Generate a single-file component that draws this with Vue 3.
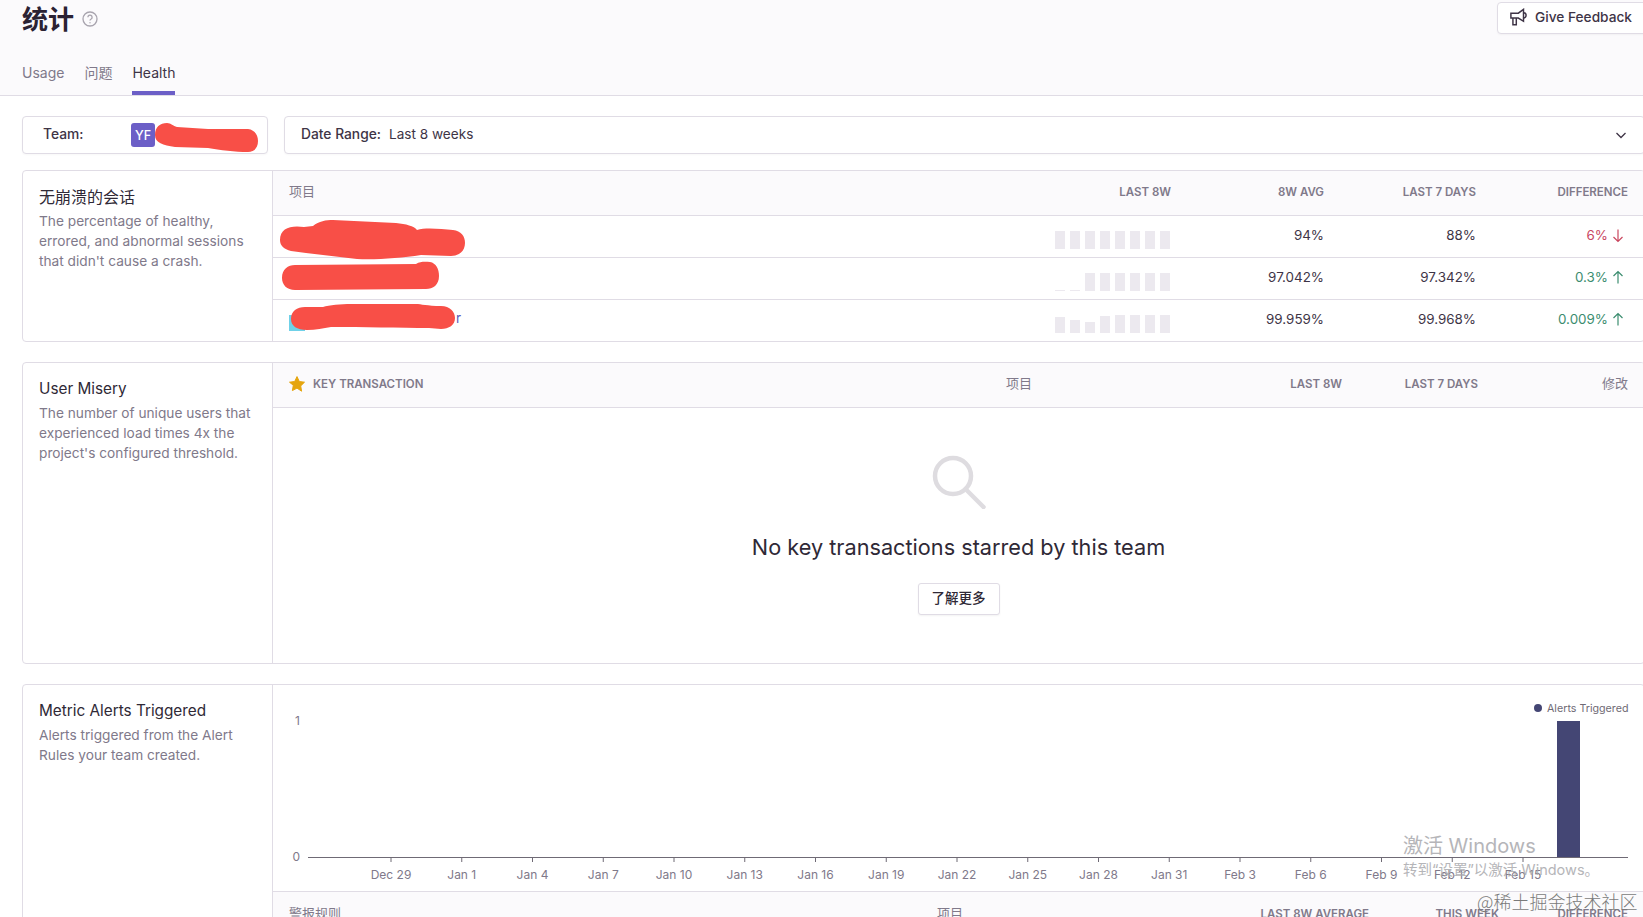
<script setup>
const rows = [
  { avg: '94%', week: '88%', diff: '6%', dir: 'down', bars: [18, 18, 18, 18, 18, 18, 18, 18] },
  { avg: '97.042%', week: '97.342%', diff: '0.3%', dir: 'up', bars: [1, 1, 18, 18, 18, 18, 18, 18] },
  { avg: '99.959%', week: '99.968%', diff: '0.009%', dir: 'up', bars: [16, 13, 11, 17, 18, 18, 18, 18] },
]
const dates = ['Dec 29', 'Jan 1', 'Jan 4', 'Jan 7', 'Jan 10', 'Jan 13', 'Jan 16', 'Jan 19', 'Jan 22', 'Jan 25', 'Jan 28', 'Jan 31', 'Feb 3', 'Feb 6', 'Feb 9', 'Feb 12', 'Feb 15']
const ticks = dates.map((label, i) => ({ label, x: 118 + i * 70.75 }))
</script>

<template>
  <div class="viewport">
    <header class="page-header">
      <div class="title-row">
        <div class="title-group">
          <h1 class="title">统计</h1>
          <svg class="help" viewBox="0 0 16 16">
            <circle cx="8" cy="8" r="7" />
            <path d="M5.900 6.200a2.100 2.100 0 1 1 3.200 1.800c-.7.4-1.100.8-1.100 1.600" />
            <circle class="dot" cx="8" cy="11.800" r=".7" />
          </svg>
        </div>
        <button class="feedback">
          <svg viewBox="0 0 16 16">
            <path d="M.8 4.600h6.600L12 1.200v10.600L7.400 8.900H.8z" />
            <path d="M12 4.200a2.300 2.300 0 0 1 0 4.600" />
            <path d="M2.600 8.900v5.900h3V8.900" />
          </svg>
          <span>Give Feedback</span>
        </button>
      </div>
      <nav class="tabs">
        <a class="tab">Usage</a>
        <a class="tab">问题</a>
        <a class="tab active">Health</a>
      </nav>
    </header>

    <main class="main">
      <div class="filters">
        <div class="filter team">
          <span class="filter-label team-label">Team:</span>
          <span class="avatar">YF</span>
          <svg class="blob team-blob" width="110" height="40" viewBox="0 0 110 40">
            <path d="M0 18C0 10 5 6 12 6C16 6 18 9 22 10L53 12L93 12C100 13 103 18 103 24C103 31 99 35 93 35C80 35 65 33 53 31L20 30C8 28 0 26 0 18Z" />
          </svg>
        </div>
        <div class="filter date">
          <span class="filter-label">Date Range:</span>
          <span class="filter-value">Last 8 weeks</span>
          <svg class="chevron" viewBox="0 0 12 12"><path d="M1.500 4l4.500 4.500L10.500 4" /></svg>
        </div>
      </div>

      <section class="card">
        <div class="side">
          <h2 class="zh">无崩溃的会话</h2>
          <p>The percentage of healthy, errored, and abnormal sessions that didn't cause a crash.</p>
        </div>
        <div class="panel">
          <div class="thead grid-sessions">
            <span class="cjk">项目</span>
            <span class="r">LAST 8W</span>
            <span class="r">8W AVG</span>
            <span class="r">LAST 7 DAYS</span>
            <span class="r">DIFFERENCE</span>
          </div>
          <div class="rows">
            <div v-for="(row, i) in rows" :key="i" class="row grid-sessions">
              <span class="project">
                <template v-if="i === 2"><i class="tile"></i><span class="project-name">r</span></template>
                <i v-if="i === 0" class="tile dark"></i>
              </span>
              <span class="spark">
                <i v-for="(b, j) in row.bars" :key="j" :style="{ height: b + 'px' }"></i>
              </span>
              <span class="r">{{ row.avg }}</span>
              <span class="r">{{ row.week }}</span>
              <span class="r diff" :class="row.dir">
                {{ row.diff }}
                <svg viewBox="0 0 12 14">
                  <path v-if="row.dir === 'down'" d="M6 1v12M1.500 8.500L6 13l4.500-4.500" />
                  <path v-else d="M6 13V1M1.500 5.500L6 1l4.500 4.500" />
                </svg>
              </span>
            </div>
            <svg class="blob rows-blob" width="210" height="126" viewBox="0 0 210 126">
              <path d="M9 26C9 14 20 11 33 13L42 12C48 7 55 6 62 6L125 9C135 10 143 12 146 16C155 13 170 15 182 16C190 17 194 22 194 29C194 37 188 42 180 42L150 41C130 44 105 46 86 45L35 39L20 37C13 35 9 32 9 26Z" />
              <path d="M11 64C11 55 17 51 24 51L145 50C150 47 155 48 159 48C165 49 168 55 168 62C168 71 162 75 155 75L24 76C16 76 11 71 11 64Z" />
              <path d="M20 105C20 97 26 93 34 93L52 93C58 91 70 90 80 90L145 90C150 90 156 92 170 92C179 92 184 98 184 104C184 111 178 115 170 115L158 114C130 114 90 113 60 113C52 114 45 116 36 116C26 116 20 112 20 105Z" />
            </svg>
          </div>
        </div>
      </section>

      <section class="card misery">
        <div class="side">
          <h2>User Misery</h2>
          <p>The number of unique users that experienced load times 4x the project's configured threshold.</p>
        </div>
        <div class="panel">
          <div class="thead grid-misery">
            <span class="key">
              <svg viewBox="0 0 16 16"><path d="M8 .6l2.300 4.900 5.200.7-3.800 3.700.9 5.300L8 12.100l-4.600 2.500.9-5.300L.5 6.200l5.200-.7z" /></svg>
              KEY TRANSACTION
            </span>
            <span class="cjk">项目</span>
            <span class="r">LAST 8W</span>
            <span class="r">LAST 7 DAYS</span>
            <span class="r cjk">修改</span>
          </div>
          <div class="empty">
            <svg class="search" viewBox="0 0 54 54">
              <circle cx="21" cy="21" r="18" />
              <path d="M33.500 34l18 18" />
            </svg>
            <p class="empty-text">No key transactions starred by this team</p>
            <button class="more">了解更多</button>
          </div>
        </div>
      </section>

      <section class="card alerts">
        <div class="side">
          <h2>Metric Alerts Triggered</h2>
          <p>Alerts triggered from the Alert Rules your team created.</p>
        </div>
        <div class="panel">
          <svg class="chart" width="1371" height="206" viewBox="0 0 1371 206">
            <text class="axis-y" x="27" y="40">1</text>
            <text class="axis-y" x="27" y="176">0</text>
            <rect class="bar" x="1284" y="36" width="23" height="136" />
            <line class="axis" x1="35" y1="172.500" x2="1355" y2="172.500" />
            <g v-for="t in ticks" :key="t.label">
              <line class="axis" :x1="t.x" y1="172" :x2="t.x" y2="177" />
              <text class="axis-x" :x="t.x" y="194">{{ t.label }}</text>
            </g>
            <circle class="bar" cx="1265" cy="23" r="4" />
            <text class="legend" x="1274" y="27">Alerts Triggered</text>
          </svg>
          <div class="thead grid-alerts">
            <span class="cjk">警报规则</span>
            <span class="cjk">项目</span>
            <span class="r">LAST 8W AVERAGE</span>
            <span class="r">THIS WEEK</span>
            <span class="r">DIFFERENCE</span>
          </div>
        </div>
      </section>
    </main>

    <div class="activate">
      <div class="activate-title">激活 Windows</div>
      <div class="activate-sub">转到“设置”以激活 Windows。</div>
    </div>
    <div class="credit">@稀土掘金技术社区</div>
  </div>
</template>

<style>
html, body { overflow: hidden; }
</style>

<style scoped>
.viewport {
  position: relative;
  width: 1643px;
  height: 917px;
  overflow: hidden;
  background: #fff;
  color: #2f2936;
  font-family: Inter, "Noto Sans CJK SC", sans-serif;
  font-size: 14px;
}
.page-header {
  box-sizing: border-box;
  height: 96px;
  padding-left: 22px;
  background: #fbfafc;
  border-bottom: 1px solid #e0dce5;
}
.title-row {
  display: flex;
  justify-content: space-between;
  height: 58px;
}
.title-group {
  display: flex;
  align-items: center;
  gap: 8px;
  height: 35px;
}
.title {
  margin: 0;
  font-size: 26px;
  font-weight: 700;
  color: #2b2233;
}
.help {
  width: 16px;
  height: 16px;
  margin-top: 3px;
  fill: none;
  stroke: #a8a4ae;
  stroke-width: 1.300;
}
.help .dot { fill: #a8a4ae; stroke: none; }
.feedback {
  display: flex;
  align-items: center;
  gap: 7px;
  box-sizing: border-box;
  width: 150px;
  height: 32px;
  margin: 2px -4px 0 0;
  padding: 0 0 3px 12px;
  background: #fff;
  border: 1px solid #e0dce5;
  border-radius: 4px;
  box-shadow: 0 1px 2px rgba(0, 0, 0, .04);
  color: #3e3446;
  font: 500 13.700px Inter, sans-serif;
}
.feedback svg {
  width: 18px;
  height: 18px;
  fill: none;
  stroke: #3e3446;
  stroke-width: 1.300;
}
.tabs {
  display: flex;
  gap: 20px;
  height: 37px;
}
.tab {
  box-sizing: border-box;
  height: 37px;
  padding-top: 6px;
  line-height: 18px;
  color: #80798a;
}
.tab.active {
  color: #3e3446;
  border-bottom: 4px solid #6c5fc7;
}
.main {
  width: 1623px;
  padding: 20px 0 0 22px;
}
.filters {
  display: flex;
  gap: 16px;
  height: 38px;
}
.filter {
  position: relative;
  display: flex;
  align-items: center;
  box-sizing: border-box;
  height: 38px;
  background: #fff;
  border: 1px solid #e0dce5;
  border-radius: 4px;
  box-shadow: 0 1px 2px rgba(0, 0, 0, .03);
}
.team {
  width: 246px;
  padding-left: 20px;
}
.date {
  flex: 1;
  padding-left: 16px;
}
.filter-label {
  margin-top: -2px;
  font-weight: 500;
  font-size: 13.800px;
  color: #3e3446;
}
.team-label { width: 88px; }
.filter-value {
  margin: -2px 0 0 8px;
  font-size: 13.600px;
  color: #3e3446;
}
.avatar {
  display: flex;
  align-items: center;
  justify-content: center;
  width: 24px;
  height: 24px;
  border-radius: 3px;
  background: #6c5fc7;
  color: #fff;
  font-size: 12.500px;
  font-weight: 500;
}
.blob {
  position: absolute;
  fill: #f84f47;
}
.team-blob {
  left: 132px;
  top: 0;
}
.chevron {
  position: absolute;
  right: 17px;
  width: 12px;
  height: 12px;
  fill: none;
  stroke: #3e3446;
  stroke-width: 1.300;
}
.card {
  display: grid;
  grid-template-columns: 250px 1fr;
  box-sizing: border-box;
  height: 172px;
  margin-top: 16px;
  background: #fff;
  border: 1px solid #e0dce5;
  border-radius: 4px;
  overflow: hidden;
}
.misery {
  height: 302px;
  margin-top: 20px;
}
.alerts {
  height: 300px;
  margin-top: 20px;
}
.side {
  padding: 16px;
  border-right: 1px solid #e0dce5;
}
.side h2 {
  margin: 0 0 4px;
  font-size: 15.300px;
  font-weight: 400;
  line-height: 20px;
  color: #2f2936;
}
.side h2.zh { font-size: 16px; }
.side p {
  margin: 0;
  line-height: 20px;
  font-size: 13.700px;
  color: #80798a;
}
.panel { min-width: 0; }
.thead {
  display: grid;
  align-items: center;
  box-sizing: border-box;
  height: 45px;
  padding: 0 16px 2px;
  background: #fbfafc;
  border-bottom: 1px solid #e0dce5;
  color: #80798a;
  font-size: 11.500px;
  font-weight: 600;
}
.cjk { margin-top: -3px; font-size: 13px; font-weight: 400; }
.r { text-align: right; }
.thead.grid-sessions { grid-template-columns: 1fr 152px 153px 152px 152px; }
.row.grid-sessions { grid-template-columns: 1fr auto 153px 152px 152px; }
.rows {
  position: relative;
}
.rows-blob {
  left: -2px;
  top: -2px;
}
.row {
  display: grid;
  align-items: center;
  box-sizing: border-box;
  height: 42px;
  padding: 0 16px;
  border-bottom: 1px solid #e0dce5;
  color: #3e3446;
  font-size: 13.400px;
}
.row:nth-child(3) { border-bottom-color: transparent; }
.project {
  display: flex;
  align-items: center;
  padding-top: 5px;
}
.tile {
  width: 16px;
  height: 16px;
  background: #6fd1e8;
}
.tile.dark {
  height: 6px;
  margin-left: 4px;
  background: #222;
}
.project-name {
  margin: 0 0 10px 151px;
  color: #5c5ab8;
  line-height: 14px;
}
.spark {
  display: flex;
  align-items: flex-end;
  gap: 5px;
  height: 18px;
  margin: 7px 1px 0 0;
}
.spark i {
  width: 10px;
  background: #ece9ef;
}
.row .r { margin-top: -3px; }
.diff {
  display: flex;
  align-items: center;
  justify-content: flex-end;
  gap: 4px;
  padding-right: 4px;
}
.diff svg {
  width: 12px;
  height: 15px;
  fill: none;
  stroke: currentColor;
  stroke-width: 1.200;
}
.diff.down { color: #c9475f; }
.diff.up { color: #3b8d6f; }
.grid-misery { grid-template-columns: 1fr 218px 118px 136px 150px; }
.grid-alerts { grid-template-columns: 1fr 290px 142px 130px 129px; }
.key {
  display: flex;
  align-items: center;
  gap: 8px;
}
.key svg {
  width: 16px;
  height: 16px;
  margin-top: -1px;
  fill: #e5a50f;
  stroke: #e5a50f;
  stroke-linejoin: round;
}
.empty {
  display: flex;
  flex-direction: column;
  align-items: center;
  padding-top: 47px;
}
.search {
  width: 54px;
  height: 54px;
  fill: none;
  stroke: #dedce0;
  stroke-width: 4.500;
  stroke-linecap: round;
}
.empty-text {
  margin: 23px 0 0;
  font-size: 21.700px;
  line-height: 30px;
  color: #2f2936;
}
.more {
  box-sizing: border-box;
  width: 82px;
  height: 32px;
  margin-top: 21px;
  padding: 0 0 4px;
  background: #fff;
  border: 1px solid #e0dce5;
  border-radius: 3px;
  box-shadow: 0 1px 2px rgba(0, 0, 0, .05);
  color: #2f2936;
  font: 500 13.500px "Noto Sans CJK SC", sans-serif;
}
.chart {
  display: block;
  font-family: Inter, sans-serif;
}
.axis-y {
  fill: #80798a;
  font-size: 12px;
  text-anchor: end;
}
.axis-x {
  fill: #80798a;
  font-size: 12px;
  text-anchor: middle;
}
.axis {
  stroke: #6f6a75;
  stroke-width: 1;
}
.bar { fill: #444674; }
.legend {
  fill: #6f6a75;
  font-size: 10.700px;
}
.alerts .thead {
  border-top: 1px solid #e0dce5;
  border-bottom: 0;
  padding-bottom: 0;
}
.activate {
  position: absolute;
  left: 1403px;
  top: 832px;
  color: #a9a9ad;
  opacity: .85;
}
.activate-title {
  font-size: 20px;
  line-height: 28px;
}
.activate-sub {
  font-size: 14.500px;
  line-height: 20px;
}
.credit {
  position: absolute;
  left: 1477px;
  top: 888px;
  color: #7a7a7a;
  font: 300 18px "Noto Sans CJK SC", sans-serif;
}
</style>
